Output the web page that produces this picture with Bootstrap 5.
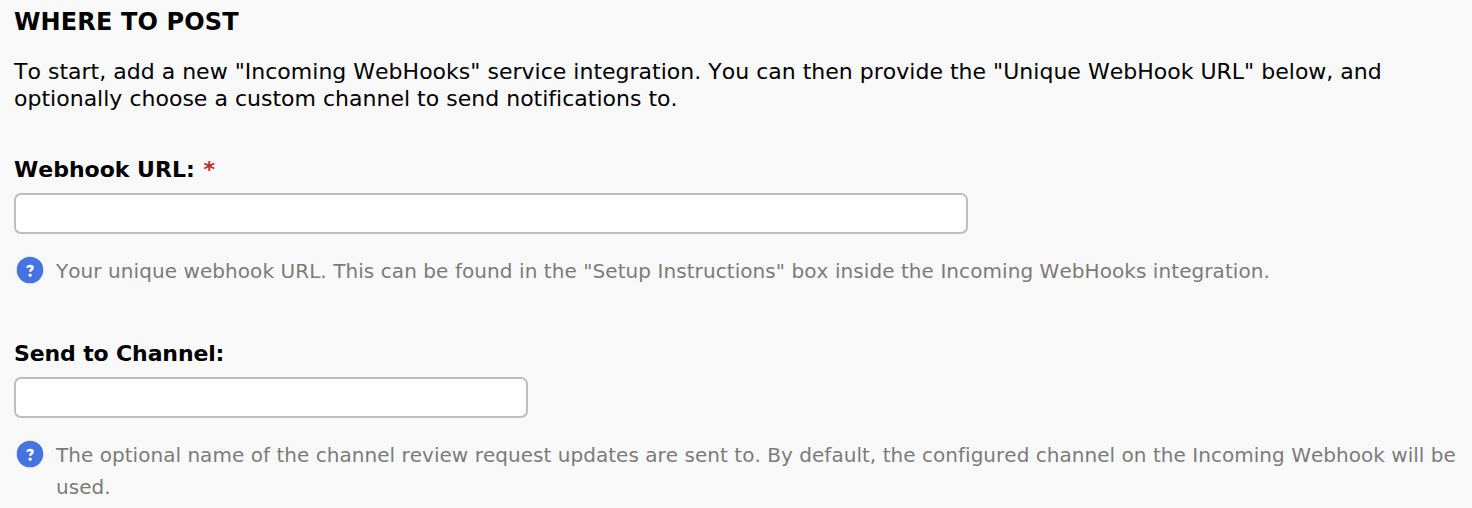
<!DOCTYPE html>
<html lang="en">
<head>
<meta charset="utf-8">
<title>Where to Post</title>
<link href="https://cdn.jsdelivr.net/npm/bootstrap@5.3.0/dist/css/bootstrap.min.css" rel="stylesheet">
<style>
body{background:#f9f9f9;color:#000;font-family:Verdana,"DejaVu Sans",sans-serif;font-size:22px;line-height:27px;font-kerning:none;font-variant-ligatures:none;overflow:hidden}
.settings{padding:9px 14px 0}
.section-title{font-size:24px;line-height:27px;font-weight:700;letter-spacing:.14px;margin:0 0 22px}
.intro{letter-spacing:.01px;margin:0 0 44px}
.form-label{font-weight:700;line-height:27px;margin:0 0 10px;display:block}
.channel-label{letter-spacing:-.13px}
.required{color:#bf2a2a;margin-left:1px}
.form-control{height:41px;border:2px solid #bebebe;border-radius:7px;background:#fff}
.url-input{width:954px}
.channel-input{width:514px}
.help{color:#7b7b7b;font-size:20px;line-height:32px;margin-top:21px}
.url-help{letter-spacing:.069px}
.channel-help{letter-spacing:.034px}
.help svg{margin:1px 12px 0 2px}
.setting + .setting{margin-top:53px}
</style>
</head>
<body>
<form class="settings">
  <h1 class="section-title">WHERE TO POST</h1>
  <p class="intro">To start, add a new "Incoming WebHooks" service integration. You can then provide the "Unique WebHook URL" below, and<br>optionally choose a custom channel to send notifications to.</p>
  <div class="setting">
    <label class="form-label" for="url">Webhook URL: <span class="required">*</span></label>
    <input id="url" type="text" class="form-control url-input">
    <div class="help url-help d-flex align-items-start">
      <svg class="flex-shrink-0" width="28" height="28" viewBox="0 0 28 28" aria-hidden="true"><circle cx="14" cy="14" r="13.3" fill="#4573e1"/><path d="M11.3 11.6q.5-1.7 2.8-1.7 2.6 0 2.6 1.9 0 1-1.3 1.8-1.1.7-1.1 2.1" fill="none" stroke="#fff" stroke-width="2.5"/><circle cx="14.2" cy="19.2" r="1.6" fill="#fff"/></svg>
      <div class="text-nowrap">Your unique webhook URL. This can be found in the "Setup Instructions" box inside the Incoming WebHooks integration.</div>
    </div>
  </div>
  <div class="setting">
    <label class="form-label channel-label" for="channel">Send to Channel:</label>
    <input id="channel" type="text" class="form-control channel-input">
    <div class="help channel-help d-flex align-items-start">
      <svg class="flex-shrink-0" width="28" height="28" viewBox="0 0 28 28" aria-hidden="true"><circle cx="14" cy="14" r="13.3" fill="#4573e1"/><path d="M11.3 11.6q.5-1.7 2.8-1.7 2.6 0 2.6 1.9 0 1-1.3 1.8-1.1.7-1.1 2.1" fill="none" stroke="#fff" stroke-width="2.5"/><circle cx="14.2" cy="19.2" r="1.6" fill="#fff"/></svg>
      <div class="text-nowrap">The optional name of the channel review request updates are sent to. By default, the configured channel on the Incoming Webhook will be<br>used.</div>
    </div>
  </div>
</form>
<script src="https://cdn.jsdelivr.net/npm/bootstrap@5.3.0/dist/js/bootstrap.bundle.min.js"></script>
</body>
</html>
